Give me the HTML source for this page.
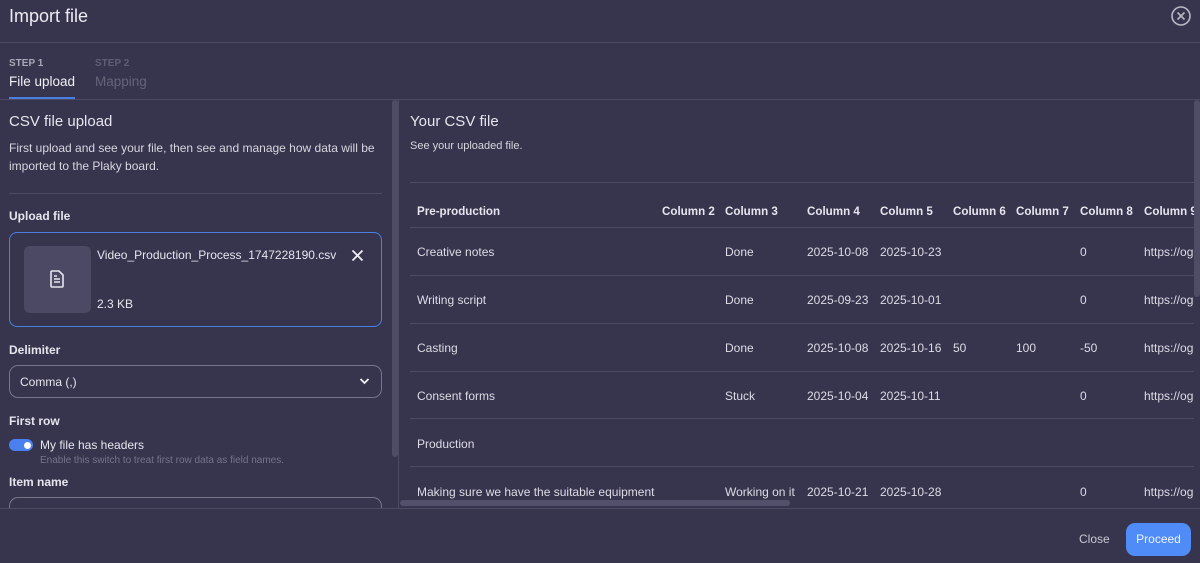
<!DOCTYPE html>
<html><head><style>
*{margin:0;padding:0;box-sizing:border-box}
body{width:1200px;height:563px;background:#37354d;font-family:"Liberation Sans",sans-serif;color:#e6e5ee;position:relative;overflow:hidden;font-size:13px}
.a{position:absolute;white-space:nowrap}
.hl{position:absolute;height:1px;background:#4d4b64}
.t{font-size:12px;color:#dddce6}
.th{font-size:11.6px;font-weight:bold;color:#e6e5ee}
.clip{position:absolute;left:0;top:0;width:1200px;height:508px;overflow:hidden}
</style></head><body>
<div class="a" style="left:9px;top:6px;font-size:18px;color:#eceaf3">Import file</div>
<svg class="a" style="left:1170px;top:5px" width="22" height="22" viewBox="0 0 22 22"><circle cx="11" cy="11" r="9" fill="none" stroke="#b9b7c6" stroke-width="1.6"/><path d="M7.5 7.5L14.5 14.5M14.5 7.5L7.5 14.5" stroke="#b9b7c6" stroke-width="1.6"/></svg>
<div class="hl" style="left:0;top:42px;width:1200px"></div>
<div class="a" style="left:9px;top:58px;font-size:10px;font-weight:bold;color:#a9a7b8">STEP 1</div>
<div class="a" style="left:9px;top:74px;font-size:13.5px;color:#f0eff5">File upload</div>
<div class="a" style="left:9px;top:97px;width:66px;height:2px;background:#4a7fe0"></div>
<div class="a" style="left:95px;top:58px;font-size:10px;font-weight:bold;color:#5f5d74">STEP 2</div>
<div class="a" style="left:95px;top:74px;font-size:13.5px;color:#65637a">Mapping</div>
<div class="hl" style="left:0;top:99px;width:1200px"></div>
<div class="clip">
<!-- left -->
<div class="a" style="left:9px;top:113px;font-size:15px;color:#e6e5ee">CSV file upload</div>
<div class="a" style="left:9px;top:139px;font-size:12px;line-height:18px;color:#d6d5df;white-space:normal;width:370px">First upload and see your file, then see and manage how data will be imported to the Plaky board.</div>
<div class="hl" style="left:9px;top:193px;width:373px"></div>
<div class="a" style="left:9px;top:209px;font-size:12px;font-weight:bold">Upload file</div>
<div class="a" style="left:9px;top:232px;width:373px;height:95px;border:1px solid #4a7fe0;border-radius:8px"></div>
<div class="a" style="left:24px;top:246px;width:67px;height:67px;background:#4b4963;border-radius:6px"></div>
<svg class="a" style="left:50px;top:270px" width="14" height="18" viewBox="0 0 14 18"><path d="M2 1h7l4 4v11a1 1 0 0 1-1 1H2a1 1 0 0 1-1-1V2a1 1 0 0 1 1-1z" fill="none" stroke="#e6e5ee" stroke-width="1.6"/><path d="M4 9h6M4 12h6M4 6h3" stroke="#e6e5ee" stroke-width="1.4"/></svg>
<div class="a" style="left:97px;top:248px;font-size:12px">Video_Production_Process_1747228190.csv</div>
<svg class="a" style="left:351px;top:249px" width="13" height="13" viewBox="0 0 13 13"><path d="M1.5 1.5L11.5 11.5M11.5 1.5L1.5 11.5" stroke="#f0eff5" stroke-width="1.8"/></svg>
<div class="a" style="left:97px;top:297px;font-size:12px">2.3 KB</div>
<div class="a" style="left:9px;top:343px;font-size:12px;font-weight:bold">Delimiter</div>
<div class="a" style="left:9px;top:365px;width:373px;height:33px;border:1px solid #77758a;border-radius:9px"></div>
<div class="a" style="left:20px;top:375px;font-size:12px">Comma (,)</div>
<svg class="a" style="left:359px;top:377px" width="11" height="8" viewBox="0 0 11 8"><path d="M1.5 2l4 4 4-4" fill="none" stroke="#f0eff5" stroke-width="1.8"/></svg>
<div class="a" style="left:9px;top:414px;font-size:12px;font-weight:bold">First row</div>
<div class="a" style="left:9px;top:439px;width:24px;height:12px;background:#4a80f0;border-radius:6px"></div>
<div class="a" style="left:24px;top:442px;width:7px;height:7px;background:#fff;border-radius:50%"></div>
<div class="a" style="left:40px;top:438px;font-size:12px">My file has headers</div>
<div class="a" style="left:40px;top:455px;font-size:10px;color:#757389">Enable this switch to treat first row data as field names.</div>
<div class="a" style="left:9px;top:475px;font-size:12px;font-weight:bold">Item name</div>
<div class="a" style="left:9px;top:497px;width:373px;height:30px;border:1px solid #77758a;border-radius:9px"></div>
<div class="a" style="left:392px;top:100px;width:6px;height:357px;background:#4f4d66;border-radius:3px"></div>
<div class="a" style="left:398px;top:100px;width:1px;height:408px;background:#4d4b64"></div>
<!-- right -->
<div class="a" style="left:410px;top:113px;font-size:15px">Your CSV file</div>
<div class="a" style="left:410px;top:140px;font-size:11px;color:#d6d5df">See your uploaded file.</div>
<div class="hl" style="left:410px;top:182px;width:784px"></div>
<div class="a th" style="left:417px;top:205px">Pre-production</div>
<div class="a th" style="left:662px;top:205px">Column 2</div>
<div class="a th" style="left:725px;top:205px">Column 3</div>
<div class="a th" style="left:807px;top:205px">Column 4</div>
<div class="a th" style="left:880px;top:205px">Column 5</div>
<div class="a th" style="left:953px;top:205px">Column 6</div>
<div class="a th" style="left:1016px;top:205px">Column 7</div>
<div class="a th" style="left:1080px;top:205px">Column 8</div>
<div class="a th" style="left:1144px;top:205px">Column 9</div>
<div class="hl" style="left:410px;top:227px;width:784px"></div>
<div class="hl" style="left:410px;top:275px;width:784px"></div>
<div class="hl" style="left:410px;top:323px;width:784px"></div>
<div class="hl" style="left:410px;top:371px;width:784px"></div>
<div class="hl" style="left:410px;top:418px;width:784px"></div>
<div class="hl" style="left:410px;top:466px;width:784px"></div>

<div class="a t" style="left:417px;top:245px">Creative notes</div>
<div class="a t" style="left:725px;top:245px">Done</div>
<div class="a t" style="left:807px;top:245px">2025-10-08</div>
<div class="a t" style="left:880px;top:245px">2025-10-23</div>
<div class="a t" style="left:1080px;top:245px">0</div>
<div class="a t" style="left:1144px;top:245px">https://og</div>

<div class="a t" style="left:417px;top:293px">Writing script</div>
<div class="a t" style="left:725px;top:293px">Done</div>
<div class="a t" style="left:807px;top:293px">2025-09-23</div>
<div class="a t" style="left:880px;top:293px">2025-10-01</div>
<div class="a t" style="left:1080px;top:293px">0</div>
<div class="a t" style="left:1144px;top:293px">https://og</div>

<div class="a t" style="left:417px;top:341px">Casting</div>
<div class="a t" style="left:725px;top:341px">Done</div>
<div class="a t" style="left:807px;top:341px">2025-10-08</div>
<div class="a t" style="left:880px;top:341px">2025-10-16</div>
<div class="a t" style="left:953px;top:341px">50</div>
<div class="a t" style="left:1016px;top:341px">100</div>
<div class="a t" style="left:1080px;top:341px">-50</div>
<div class="a t" style="left:1144px;top:341px">https://og</div>

<div class="a t" style="left:417px;top:389px">Consent forms</div>
<div class="a t" style="left:725px;top:389px">Stuck</div>
<div class="a t" style="left:807px;top:389px">2025-10-04</div>
<div class="a t" style="left:880px;top:389px">2025-10-11</div>
<div class="a t" style="left:1080px;top:389px">0</div>
<div class="a t" style="left:1144px;top:389px">https://og</div>

<div class="a t" style="left:417px;top:437px">Production</div>

<div class="a t" style="left:417px;top:485px">Making sure we have the suitable equipment</div>
<div class="a t" style="left:725px;top:485px">Working on it</div>
<div class="a t" style="left:807px;top:485px">2025-10-21</div>
<div class="a t" style="left:880px;top:485px">2025-10-28</div>
<div class="a t" style="left:1080px;top:485px">0</div>
<div class="a t" style="left:1144px;top:485px">https://og</div>
<div class="a" style="left:400px;top:500px;width:390px;height:6px;background:#52506a;border-radius:3px"></div>
<div class="a" style="left:1194px;top:100px;width:6px;height:197px;background:#4f4d66;border-radius:3px"></div>
</div>
<div class="hl" style="left:0;top:508px;width:1200px"></div>
<!-- footer -->
<div class="a" style="left:1079px;top:532px;font-size:12px;color:#c9c8d3">Close</div>
<div class="a" style="left:1126px;top:523px;width:65px;height:33px;background:#4f8cf7;border-radius:9px;color:#eef3ff;font-size:12px;text-align:center;line-height:33px">Proceed</div>
</body></html>
